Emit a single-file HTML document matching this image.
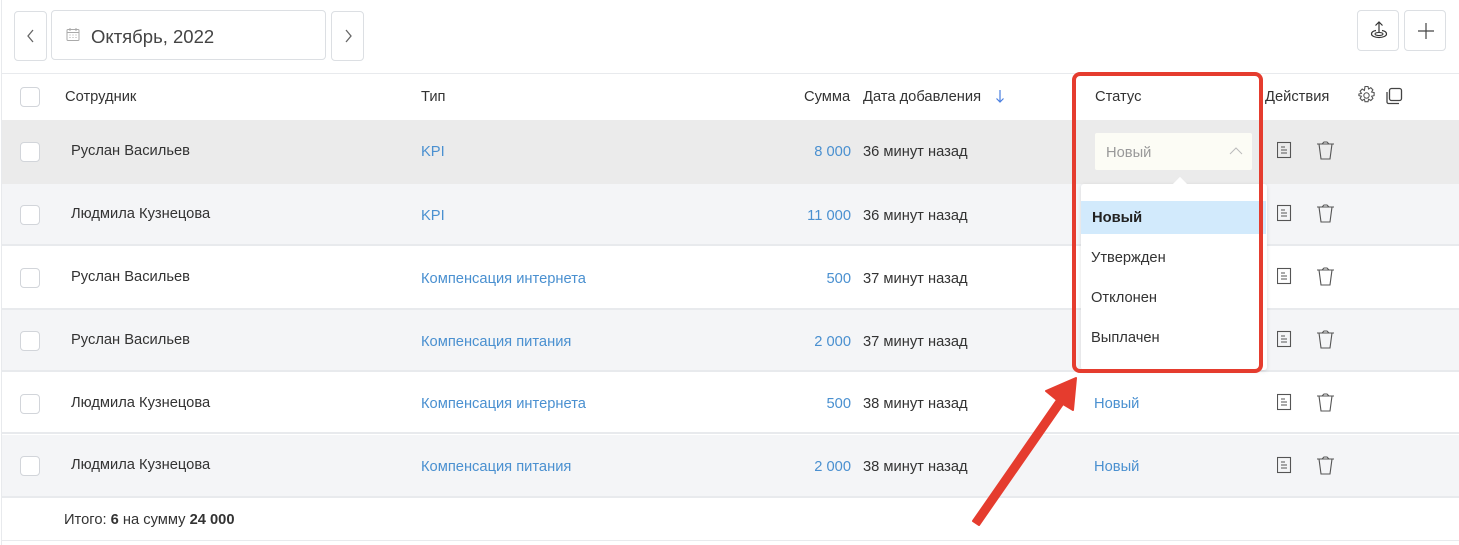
<!DOCTYPE html>
<html><head><meta charset="utf-8"><style>
*{margin:0;padding:0;box-sizing:border-box}
body{width:1459px;height:545px;background:#fff;font-family:"Liberation Sans",sans-serif;font-size:14.7px;color:#333;position:relative;overflow:hidden}
.a{position:absolute}
.btn{position:absolute;border:1px solid #dcdfe3;border-radius:4px;background:#fff}
.row{position:absolute;left:2px;width:1457px}
.cb{position:absolute;left:20px;width:20px;height:20px;border:1px solid #d2d5da;border-radius:4px;background:#fff}
.t{position:absolute;line-height:16px;white-space:nowrap;margin-top:1px}
.bl{color:#4a90d0}
.r{text-align:right}
</style></head><body>
<div class="a" style="left:1px;top:0;width:1px;height:545px;background:#e8eaed"></div>
<div class="btn" style="left:14px;top:11px;width:33px;height:50px"><svg class="a" style="left:10px;top:17px" width="12" height="14"><path d="M8 1 3 7l5 6" stroke="#666" stroke-width="1.3" fill="none"/></svg></div>
<div class="btn" style="left:51px;top:10px;width:275px;height:50px">
<svg class="a" style="left:14px;top:16px" width="14" height="15"><rect x="1" y="2.5" width="12" height="11" rx="1" fill="none" stroke="#aaa"/><path d="M1 5.5h12M4 1v3M10 1v3" stroke="#aaa"/><path d="M3.5 8h1M6.5 8h1M9.5 8h1M3.5 10.5h1M6.5 10.5h1M9.5 10.5h1" stroke="#aaa"/></svg>
<div class="t" style="left:39px;top:15px;font-size:18.5px;line-height:20px;color:#444">Октябрь, 2022</div></div>
<div class="btn" style="left:331px;top:11px;width:33px;height:50px"><svg class="a" style="left:10px;top:17px" width="12" height="14"><path d="M4 1l5 6-5 6" stroke="#666" stroke-width="1.3" fill="none"/></svg></div>
<div class="btn" style="left:1357px;top:10px;width:42px;height:41px"><svg class="a" style="left:11px;top:9px" width="20" height="22"><path d="M10 2v10M6.5 5.5 10 2l3.5 3.5" stroke="#333" stroke-width="1.2" fill="none"/><path d="M7 10.5C4 11 2.5 12.5 2.5 14c0 2 3.5 3.5 7.5 3.5s7.5-1.5 7.5-3.5c0-1.5-1.5-3-4.5-3.5" stroke="#333" stroke-width="1.2" fill="none"/><ellipse cx="10" cy="14" rx="4" ry="1.5" stroke="#333" fill="none"/></svg></div>
<div class="btn" style="left:1404px;top:10px;width:42px;height:41px"><svg class="a" style="left:11px;top:10px" width="20" height="20"><path d="M10 2v16M2 10h16" stroke="#444" stroke-width="1.2"/></svg></div>
<div class="a" style="left:2px;top:73px;width:1457px;height:1px;background:#e8eaed"></div>
<!-- header -->
<div class="cb" style="top:87px"></div>
<div class="t" style="left:65px;top:88px">Сотрудник</div>
<div class="t" style="left:421px;top:88px">Тип</div>
<div class="t" style="left:804px;top:88px">Сумма</div>
<div class="t" style="left:863px;top:88px">Дата добавления</div>
<svg class="a" style="left:995px;top:89px" width="10" height="15"><path d="M5 1v12M1.5 9.5 5 13l3.5-3.5" stroke="#4a7fe0" stroke-width="1.2" fill="none"/></svg>
<div class="t" style="left:1095px;top:88px">Статус</div>
<div class="t" style="left:1265px;top:88px">Действия</div>
<svg class="a" style="left:1356px;top:85px" width="21" height="21"><circle cx="10.5" cy="10.5" r="2.7" fill="none" stroke="#555"/><path d="M9 1.5h3l.6 2.5 2.2-1.3 2.1 2.1-1.3 2.2 2.5.6v3l-2.5.6 1.3 2.2-2.1 2.1-2.2-1.3-.6 2.5H9l-.6-2.5-2.2 1.3-2.1-2.1 1.3-2.2-2.5-.6V9l2.5-.6-1.3-2.2 2.1-2.1 2.2 1.3z" fill="none" stroke="#555" stroke-width="1.1"/></svg>
<svg class="a" style="left:1385px;top:87px" width="19" height="19"><rect x="4.5" y="1.5" width="12" height="12" rx="2" fill="none" stroke="#444" stroke-width="1.3"/><path d="M2 5v10c0 .8.7 1.5 1.5 1.5H14" fill="none" stroke="#444" stroke-width="1.3"/></svg>
<!-- rows -->
<div class="row" style="top:120px;height:64px;background:#ebebeb"></div>
<div class="row" style="top:184px;height:62px;background:#f4f5f7;border-bottom:2px solid #e8eaed"></div>
<div class="row" style="top:248px;height:62px;background:#fff;border-bottom:2px solid #e8eaed"></div>
<div class="row" style="top:310px;height:62px;background:#f4f5f7;border-bottom:2px solid #e8eaed"></div>
<div class="row" style="top:374px;height:60px;background:#fff;border-bottom:2px solid #e8eaed"></div>
<div class="row" style="top:435px;height:63px;background:#f4f5f7;border-bottom:2px solid #e8eaed"></div>
<div class="row" style="top:540px;height:1px;background:#e8eaed"></div>

<div class="cb" style="top:142px"></div><div class="t" style="left:71px;top:142px">Руслан Васильев</div><div class="t bl" style="left:421px;top:143px">KPI</div><div class="t bl r" style="left:751px;width:100px;top:143px">8 000</div><div class="t" style="left:863px;top:143px">36 минут назад</div>
<div class="cb" style="top:205px"></div><div class="t" style="left:71px;top:205px">Людмила Кузнецова</div><div class="t bl" style="left:421px;top:207px">KPI</div><div class="t bl r" style="left:751px;width:100px;top:207px">11 000</div><div class="t" style="left:863px;top:207px">36 минут назад</div>
<div class="cb" style="top:268px"></div><div class="t" style="left:71px;top:268px">Руслан Васильев</div><div class="t bl" style="left:421px;top:270px">Компенсация интернета</div><div class="t bl r" style="left:751px;width:100px;top:270px">500</div><div class="t" style="left:863px;top:270px">37 минут назад</div>
<div class="cb" style="top:331px"></div><div class="t" style="left:71px;top:331px">Руслан Васильев</div><div class="t bl" style="left:421px;top:333px">Компенсация питания</div><div class="t bl r" style="left:751px;width:100px;top:333px">2 000</div><div class="t" style="left:863px;top:333px">37 минут назад</div>
<div class="cb" style="top:394px"></div><div class="t" style="left:71px;top:394px">Людмила Кузнецова</div><div class="t bl" style="left:421px;top:395px">Компенсация интернета</div><div class="t bl r" style="left:751px;width:100px;top:395px">500</div><div class="t" style="left:863px;top:395px">38 минут назад</div><div class="t bl" style="left:1094px;top:395px">Новый</div>
<div class="cb" style="top:456px"></div><div class="t" style="left:71px;top:456px">Людмила Кузнецова</div><div class="t bl" style="left:421px;top:458px">Компенсация питания</div><div class="t bl r" style="left:751px;width:100px;top:458px">2 000</div><div class="t" style="left:863px;top:458px">38 минут назад</div><div class="t bl" style="left:1094px;top:458px">Новый</div>
<div class="t" style="left:64px;top:511px">Итого: <b>6</b> на сумму <b>24 000</b></div>

<!-- action icons -->
<svg class="a" style="left:1277px;top:0" width="60" height="480">
<defs><g id="ic"><rect x="0.5" y="2.5" width="13" height="15" fill="none" stroke="#555" stroke-width="1.1"/><path d="M4 7h4M4 10h6M4 13h6" stroke="#555"/><path d="M40 4h17M45 4l2-2h3l2 2M42 4l2 15h9l2-15" fill="none" stroke="#555" stroke-width="1.1"/></g></defs>
<use href="#ic" y="140"/><use href="#ic" y="203"/><use href="#ic" y="266"/><use href="#ic" y="329"/><use href="#ic" y="392"/><use href="#ic" y="455"/>
</svg>

<!-- select -->
<div class="a" style="left:1095px;top:133px;width:157px;height:37px;background:#fcfcf5;border-radius:2px"></div>
<div class="t" style="left:1106px;top:144px;color:#999">Новый</div>
<svg class="a" style="left:1229px;top:146px" width="14" height="10"><path d="M1 8l6-6 6 6" stroke="#bbb" fill="none"/></svg>
<!-- dropdown -->
<div class="a" style="left:1081px;top:184px;width:186px;height:186px;background:#fff;box-shadow:0 1px 4px rgba(0,0,0,.12);border-radius:3px"></div>
<div class="a" style="left:1175px;top:179px;width:10px;height:10px;background:#fff;transform:rotate(45deg)"></div>
<div class="a" style="left:1081px;top:201px;width:185px;height:33px;background:#d2eafc"></div>
<div class="t" style="left:1092px;top:209px;font-weight:bold;color:#222">Новый</div>
<div class="t" style="left:1091px;top:249px">Утвержден</div>
<div class="t" style="left:1091px;top:289px">Отклонен</div>
<div class="t" style="left:1091px;top:329px">Выплачен</div>
<!-- red annotation -->
<div class="a" style="left:1072px;top:72px;width:191px;height:301px;border:4px solid #e53c2e;border-radius:8px"></div>
<svg class="a" style="left:0;top:0" width="1459" height="545"><path d="M973 521 L1057 400 L1046 391 L1076 378 L1073 410 L1063 404 L979 525 Z" fill="#e53c2e" stroke="#e53c2e" stroke-width="2" stroke-linejoin="round"/></svg>
</body></html>
